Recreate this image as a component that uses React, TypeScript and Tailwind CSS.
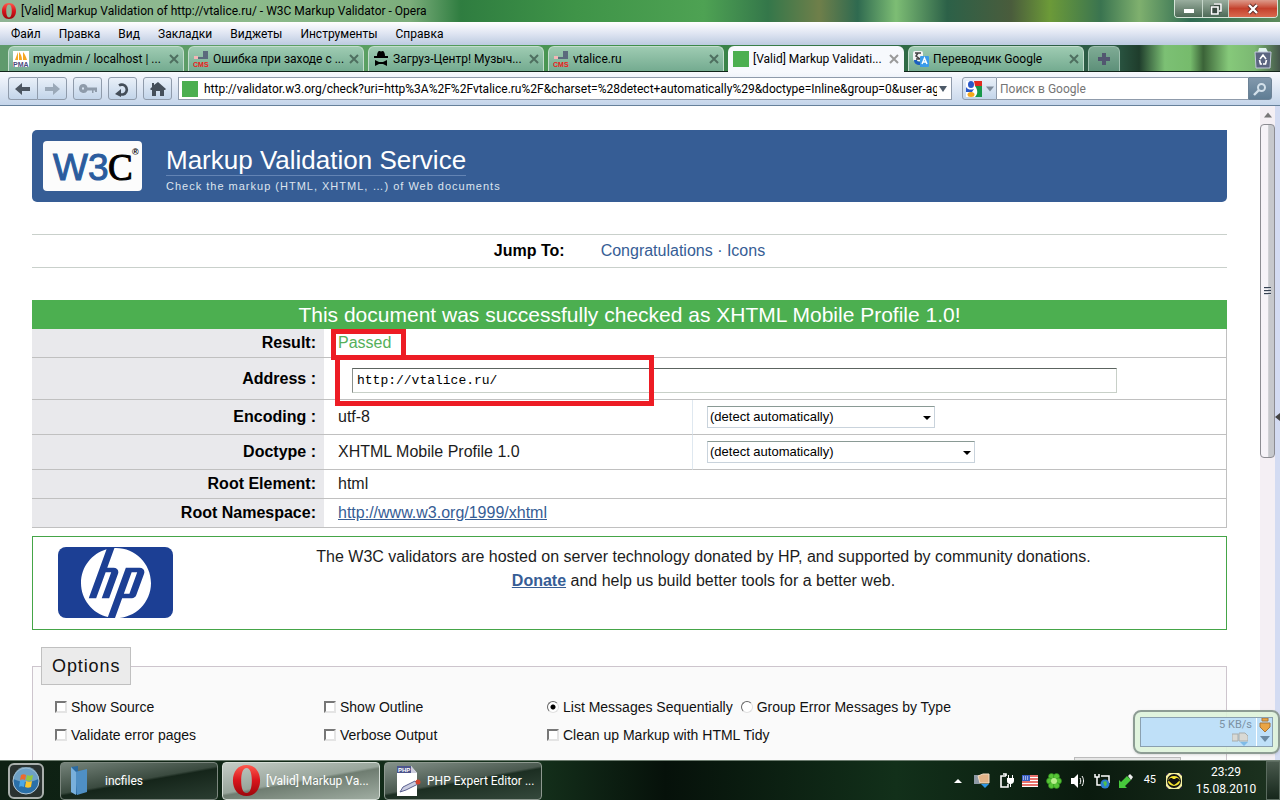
import type { ReactNode } from 'react';
import { SiHp } from 'react-icons/si';

const menuItems = ['Файл', 'Правка', 'Вид', 'Закладки', 'Виджеты', 'Инструменты', 'Справка'];

const OperaIcon = ({ className }: { className: string }) => (
  <svg viewBox="0 0 30 32" className={className} aria-hidden="true">
    <defs>
      <linearGradient id="operaRed" x1="0" y1="0" x2="0" y2="1">
        <stop offset="0" stopColor="#ff5a4e" />
        <stop offset="0.5" stopColor="#d8141b" />
        <stop offset="1" stopColor="#9c070c" />
      </linearGradient>
    </defs>
    <path
      fill="url(#operaRed)"
      fillRule="evenodd"
      d="M15 0C6 0 1 7 1 16s5 16 14 16 14-7 14-16S24 0 15 0zm0 3c4 0 5.500 6 5.500 13S19 29 15 29 9.500 23 9.500 16 11 3 15 3z"
    />
  </svg>
);

const PmaIcon = () => (
  <svg viewBox="0 0 16 16" className="size-4 shrink-0 bg-white" aria-hidden="true">
    <path d="M5 1v8H2c1-3 2-5 3-8zM6 1c2 2 3 5 3 8H6zM10 1c2 2 3 5 4 8h-4z" fill="#f5a623" />
    <text x="0" y="16" fontSize="7" fontWeight="bold" fill="#4a4a7c" fontFamily="Liberation Sans">PMA</text>
  </svg>
);

const CmsIcon = () => (
  <svg viewBox="0 0 16 16" className="size-4 shrink-0" aria-hidden="true">
    <path d="M10 0h5v8H5V6h5z" fill="#5b6a7d" />
    <path d="M1 5h4v3H1z" fill="#f3b6b6" />
    <text x="0" y="16" fontSize="7" fontWeight="bold" fill="#f01818" fontFamily="Liberation Sans">CMS</text>
  </svg>
);

const SpyIcon = () => (
  <svg viewBox="0 0 16 16" className="size-4 shrink-0" aria-hidden="true">
    <path d="M4 5c0-3 1-5 2.500-5 1 0 1 .6 1.500.6S9 0 9.500 0C11 0 12 2 12 5h3v2H1V5zM2 9l4 2h4l4-2v6l-4-2H6l-4 2z" fill="#000" />
  </svg>
);

const ValidIcon = () => <span className="size-4 shrink-0 bg-[#4caf50]" />;

const TranslateIcon = () => (
  <svg viewBox="0 0 16 16" className="size-4 shrink-0" aria-hidden="true">
    <rect x="0" y="0" width="10" height="10" rx="2" fill="#f4f4f4" />
    <path d="M2 2h6M5 2L3 5l4 3M3 8h5" stroke="#444" strokeWidth="1.500" fill="none" />
    <path d="M1 9c0 3 2 5 6 5v2l3-4-3-3v2c-2 0-3-1-3-2z" fill="#1b5fc0" />
    <rect x="7" y="5" width="9" height="11" rx="1" fill="#3a9bea" />
    <path d="M9 13l2.500-6 2.500 6M10 11h3" stroke="#fff" strokeWidth="1.400" fill="none" />
  </svg>
);

const tabs: { title: string; icon: ReactNode; active?: boolean }[] = [
  { title: 'myadmin / localhost | ...', icon: <PmaIcon /> },
  { title: 'Ошибка при заходе с ...', icon: <CmsIcon /> },
  { title: 'Загруз-Центр! Музыч...', icon: <SpyIcon /> },
  { title: 'vtalice.ru', icon: <CmsIcon /> },
  { title: '[Valid] Markup Validati...', icon: <ValidIcon />, active: true },
  { title: 'Переводчик Google', icon: <TranslateIcon /> },
];

const TitleBar = () => (
  <div className="flex h-[22px] shrink-0 items-center justify-between bg-[linear-gradient(90deg,#8fb495_0%,#8cba8b_20%,#7cae7c_32%,#2f7d40_36%,#3f9448_45%,#4ea253_55%,#34774a_60%,#6f7f4a_64%,#2f6a50_67%,#7dbd74_70%,#2c6148_74%,#4a5c3c_79%,#6c9a38_82%,#3a7450_86%,#7fb06e_89%,#2f6b52_93%,#5c8b5b_100%)]">
    <div className="flex items-center gap-1 pl-px">
      <OperaIcon className="size-4" />
      <span className="text-xs text-black">[Valid] Markup Validation of http://vtalice.ru/ - W3C Markup Validator - Opera</span>
    </div>
    <div className="mr-0.5 flex h-[18px] self-start overflow-hidden rounded-b border border-t-0 border-[#d5e4d8]">
      <button aria-label="Свернуть" className="flex w-7 items-center justify-center border-r border-[#c5d6ca] bg-gradient-to-b from-[#9aae9f] to-[#4e6a57]">
        <span className="mt-1 h-1 w-2.5 bg-white" />
      </button>
      <button aria-label="Развернуть" className="flex w-[26px] items-center justify-center border-r border-[#c5d6ca] bg-gradient-to-b from-[#9aae9f] to-[#4e6a57]">
        <svg viewBox="0 0 12 12" className="size-3" aria-hidden="true">
          <path d="M4 1h7v7H9M1 4h7v7H1zM4 6.500h1.500v2H4z" fill="none" stroke="#3b4a42" strokeWidth="3" />
          <path d="M4 1h7v7H9M1.500 4h6.500v7H1.500z" fill="none" stroke="#fff" strokeWidth="1.600" />
        </svg>
      </button>
      <button aria-label="Закрыть" className="flex w-12 items-center justify-center bg-gradient-to-b from-[#dc9a8b] via-[#c4402c] to-[#d9694e]">
        <svg viewBox="0 0 12 12" className="size-3" aria-hidden="true">
          <path d="M2 2l8 8M10 2l-8 8" stroke="#5c2a26" strokeWidth="4" />
          <path d="M2 2l8 8M10 2l-8 8" stroke="#fff" strokeWidth="2.400" />
        </svg>
      </button>
    </div>
  </div>
);

const MenuBar = () => (
  <nav className="flex h-[23px] shrink-0 items-center gap-[18px] bg-gradient-to-b from-white via-[#dfe5f2] to-[#bccbe0] pl-[11px]">
    {menuItems.map((item) => (
      <button key={item} className="text-xs text-black">{item}</button>
    ))}
  </nav>
);

const TabBar = () => (
  <div className="flex h-[27px] shrink-0 items-end border-b border-[#10241a] bg-[linear-gradient(90deg,#5f9a6c_0%,#5aa062_30%,#3f8f4a_50%,#2f6b45_70%,#2c5a46_87%,#1f3d2c_89%,#7cc074_91%,#76bb6c_93%,#3b6338_94%,#86c97a_96%,#7bb872_98%,#44554a_100%)] pl-2">
    <div className="flex min-w-0 flex-1 gap-1">
      {tabs.map((tab) => (
        <div
          key={tab.title}
          className={
            tab.active
              ? '-mb-px flex h-[26px] w-44 items-center gap-1 rounded-t-md bg-[#f7f9fd] px-[5px]'
              : 'flex h-[25px] w-44 items-center gap-1 rounded-t-md border border-b-0 border-[#c3ddcd] bg-gradient-to-b from-[#9ecbb2] to-[#74ab90] px-1'
          }
        >
          {tab.icon}
          <span className="flex-1 truncate text-xs text-black">{tab.title}</span>
          <button aria-label="Закрыть вкладку" className="shrink-0">
            <svg viewBox="0 0 10 10" className="size-2.5" aria-hidden="true">
              <path d="M1 1l8 8M9 1l-8 8" stroke={tab.active ? '#9a9a9a' : '#4f6f60'} strokeWidth="2" />
            </svg>
          </button>
        </div>
      ))}
      <button aria-label="Новая вкладка" className="flex h-[25px] w-8 items-center justify-center rounded-t-md border border-b-0 border-[#9fc0b0] bg-gradient-to-b from-[#7fab95] to-[#5d9079]">
        <svg viewBox="0 0 12 12" className="size-3" aria-hidden="true">
          <path d="M4 0h4v4h4v4H8v4H4V8H0V4h4z" fill="#525670" />
        </svg>
      </button>
    </div>
    <button aria-label="Закрытые вкладки" className="mr-2 self-center">
      <svg viewBox="0 0 18 22" className="h-[22px] w-[18px]" aria-hidden="true">
        <path d="M5 1h7l2 4H4z" fill="#dff2ee" />
        <path d="M1 5h16l-1 16H2z" fill="#5b6580" stroke="#c3cadb" />
        <path d="M6 12l3-4 3 4M12.500 13l-1 4H9M5.500 13l1 4H8" stroke="#fff" strokeWidth="1.600" fill="none" />
      </svg>
    </button>
  </div>
);

const toolButton = 'flex h-[23px] items-center justify-center rounded-[3px] border border-[#8f9bab] bg-gradient-to-b from-[#e9f0f8] to-[#c3d5ea]';

const ToolBar = () => (
  <div className="flex h-[34px] shrink-0 items-center gap-1.5 border-b border-[#66809a] bg-gradient-to-b from-[#f7f9fd] to-[#c5d5ea] px-2">
    <div className="flex">
      <button aria-label="Назад" className={`${toolButton} w-[29px] rounded-r-none border-r-0`}>
        <svg viewBox="0 0 16 12" className="h-3 w-4" aria-hidden="true">
          <path d="M0 6l7-6v4h8v4H7v4z" fill="#4c5661" />
        </svg>
      </button>
      <button aria-label="Вперед" className={`${toolButton} w-[30px] rounded-l-none`}>
        <svg viewBox="0 0 16 12" className="h-3 w-4" aria-hidden="true">
          <path d="M16 6L9 0v4H1v4h8v4z" fill="#9ba9b8" />
        </svg>
      </button>
    </div>
    <button aria-label="Пароль" className={`${toolButton} w-[29px]`}>
      <svg viewBox="0 0 18 10" className="h-2.5 w-[18px]" aria-hidden="true">
        <path d="M4.500 0a4.500 4.500 0 1 0 4 6.500H13V9h1.500V6.500H16V8h2V3.500H8.500A4.500 4.500 0 0 0 4.500 0zM3 3.500h2v2H3z" fill="#8e9baa" fillRule="evenodd" />
      </svg>
    </button>
    <button aria-label="Обновить" className={`${toolButton} w-[29px]`}>
      <svg viewBox="0 0 16 16" className="size-4" aria-hidden="true">
        <path d="M4 4.500a5 5 0 1 1 4 9H5" fill="none" stroke="#434d58" strokeWidth="2.600" />
        <path d="M0 13l6-5v8z" fill="#434d58" />
      </svg>
    </button>
    <button aria-label="Домой" className={`${toolButton} w-[29px]`}>
      <svg viewBox="0 0 16 14" className="h-3.5 w-4" aria-hidden="true">
        <path d="M8 0l8 7-1 1h-1v6h-4V9H6v5H2V8H1L0 7l2-2V1h2v2z" fill="#454f5a" />
      </svg>
    </button>
    <div className="flex h-[23px] min-w-0 flex-1 items-center gap-1.5 border border-[#8f9bab] bg-white pr-1 pl-[3px]">
      <ValidIcon />
      <input
        aria-label="Адрес"
        className="min-w-0 flex-1 text-xs text-black outline-none"
        defaultValue="http://validator.w3.org/check?uri=http%3A%2F%2Fvtalice.ru%2F&charset=%28detect+automatically%29&doctype=Inline&group=0&user-agent=W3C_Validator"
      />
      <svg viewBox="0 0 8 6" className="-ml-1 h-1.5 w-2 shrink-0" aria-hidden="true"><path d="M0 0h8L4 6z" fill="#4d5a68" /></svg>
    </div>
    <div className="ml-1 flex h-[23px] w-[310px]">
      <button aria-label="Google" className={`${toolButton} w-[35px] gap-1 rounded-r-none`}>
        <svg viewBox="0 0 16 16" className="size-4" aria-hidden="true">
          <rect width="16" height="16" fill="#fff" />
          <path d="M8 0h8v5H9z" fill="#e02a20" />
          <path d="M9 5h7v11H9c3-3 3-7 0-11z" fill="#17984a" />
          <ellipse cx="5" cy="3.500" rx="3" ry="3.500" fill="#2a58c8" />
          <path d="M0 6c2 3 5 3 8 2L6 11H0z" fill="#2a58c8" />
          <ellipse cx="5" cy="13.500" rx="3.500" ry="2.500" fill="#f6a81c" />
        </svg>
        <svg viewBox="0 0 8 5" className="h-1.5 w-2" aria-hidden="true"><path d="M0 0h8L4 5z" fill="#7c8a99" /></svg>
      </button>
      <input
        aria-label="Поиск"
        placeholder="Поиск в Google"
        className="min-w-0 flex-1 border-y border-[#8f9bab] bg-white px-[3px] text-xs outline-none placeholder:text-[#757575]"
      />
      <button aria-label="Найти" className="flex w-6 items-center justify-center rounded-r-[3px] border border-[#6c8296] bg-gradient-to-b from-[#8298ac] to-[#5f7d94]">
        <svg viewBox="0 0 14 14" className="size-3.5" aria-hidden="true">
          <circle cx="8.500" cy="5.500" r="3.500" fill="none" stroke="#d3e0ea" strokeWidth="2" />
          <path d="M6 8l-5 5" stroke="#d3e0ea" strokeWidth="2.400" />
        </svg>
      </button>
    </div>
  </div>
);

const W3CLogo = () => (
  <svg viewBox="0 0 99 50" className="h-[50px] w-[99px] rounded bg-[#fcfcfc]" role="img" aria-label="W3C">
    <text x="10" y="39" fontFamily="'Liberation Sans',sans-serif" fontSize="37" fill="#2b5c9e" stroke="#2b5c9e">W3</text>
    <text x="65" y="39" fontFamily="'Liberation Serif',serif" fontSize="37" fill="#000" stroke="#000">C</text>
    <text x="89" y="14" fontFamily="'Liberation Sans',sans-serif" fontSize="9" fontWeight="bold" fill="#000">®</text>
  </svg>
);

const PageHeader = () => (
  <header className="flex h-[72px] items-center rounded-[5px] rounded-tr-none bg-[#365d95] pl-[11px]">
    <W3CLogo />
    <div className="ml-6 self-start pt-[15px] font-['Liberation_Sans',sans-serif]">
      <h1>
        <a href="#service" className="inline-block border-b border-[#6384b4] text-[26px] leading-[30px] text-white">Markup Validation Service</a>
      </h1>
      <p className="text-[11px] leading-5 tracking-[1px] text-[#dde4ee]">Check the markup (HTML, XHTML, …) of Web documents</p>
    </div>
  </header>
);

const rowHead = 'border-b border-[#c0c0c0] bg-[#e9e9ec] pr-2 text-right font-bold text-black';
const rowCell = 'border-b border-[#c0c0c0] pl-3.5';

const DetectSelect = ({ id, className }: { id: string; className: string }) => (
  <div className={`relative ${className}`}>
    <select id={id} className="block h-[22px] w-full appearance-none border border-[#c9d3dc] border-t-[#8a9a95] bg-white pl-0.5 text-[13px] leading-5 text-black">
      <option>(detect automatically)</option>
    </select>
    <svg viewBox="0 0 8 4" className="pointer-events-none absolute top-2.5 right-1 h-1 w-2" aria-hidden="true"><path d="M0 0h8L4 4z" fill="#000" /></svg>
  </div>
);

const ResultTable = () => (
  <div className="relative mt-8">
    <table className="w-full table-fixed border-separate border-spacing-0 border-r border-[#c0c0c0] text-left">
      <caption className="h-[29px] bg-[#4caf50] text-[21px] leading-[29px] text-white">
        This document was successfully checked as XHTML Mobile Profile 1.0!
      </caption>
      <colgroup>
        <col className="w-[292px]" />
        <col className="w-[368px]" />
        <col />
      </colgroup>
      <tbody>
        <tr className="h-[29px]">
          <th scope="row" className={rowHead}>Result:</th>
          <td colSpan={2} className={`${rowCell} text-[#55b05a]`}>Passed</td>
        </tr>
        <tr className="h-[42px]">
          <th scope="row" className={rowHead}><label htmlFor="uri">Address :</label></th>
          <td colSpan={2} className={`${rowCell} pt-1 pr-28`}>
            <input
              id="uri"
              defaultValue="http://vtalice.ru/"
              className="ml-3.5 block h-[25px] w-full max-w-[765px] border border-[#c8d0c8] border-t-[#5c6460] border-l-[#8a908c] bg-white px-1 font-['Liberation_Mono',monospace] text-[13px] text-black outline-none"
            />
          </td>
        </tr>
        <tr className="h-[35px]">
          <th scope="row" className={rowHead}><label htmlFor="charset">Encoding :</label></th>
          <td className={rowCell}>utf-8</td>
          <td className={`${rowCell} border-l border-l-[#dfe8f0]`}><DetectSelect id="charset" className="w-[228px]" /></td>
        </tr>
        <tr className="h-[35px]">
          <th scope="row" className={rowHead}><label htmlFor="doctype">Doctype :</label></th>
          <td className={rowCell}>XHTML Mobile Profile 1.0</td>
          <td className={`${rowCell} border-l border-l-[#dfe8f0]`}><DetectSelect id="doctype" className="w-[268px]" /></td>
        </tr>
        <tr className="h-[29px]">
          <th scope="row" className={rowHead}>Root Element:</th>
          <td colSpan={2} className={rowCell}>html</td>
        </tr>
        <tr className="h-[29px]">
          <th scope="row" className={rowHead}>Root Namespace:</th>
          <td colSpan={2} className={rowCell}>
            <a href="http://www.w3.org/1999/xhtml" className="text-[#365d95] underline">http://www.w3.org/1999/xhtml</a>
          </td>
        </tr>
      </tbody>
    </table>
    {/* red marker frames */}
    <div className="pointer-events-none absolute top-[29px] left-[299px] h-[31px] w-[75px] border-[5px] border-[#ed1c24]" />
    <div className="pointer-events-none absolute top-[55px] left-[303px] h-[51px] w-[319px] border-[5px] border-[#ed1c24]" />
  </div>
);

const Donation = () => (
  <div className="mt-2 flex h-[94px] border border-[#45a548]">
    <div className="w-[148px] shrink-0 pt-2.5 pl-[25px]">
      <div className="flex h-[71px] w-[115px] items-center justify-center overflow-hidden rounded-lg bg-[#1c3f94]">
        <SiHp className="size-[70px] text-white" title="HP" />
      </div>
    </div>
    <p className="flex-1 pt-2 text-center leading-6">
      The W3C validators are hosted on server technology donated by HP, and supported by community donations.
      <br />
      <a href="#donate" className="font-bold text-[#365d95] underline">Donate</a> and help us build better tools for a better web.
    </p>
  </div>
);

const boxClass = 'size-3 appearance-none border-2 border-[#e4e4e4] border-t-[#777] border-l-[#777] bg-white';
const radioClass = "size-3 appearance-none rounded-full border border-[#e0e0e0] border-t-[#666] border-l-[#666] bg-white checked:bg-[radial-gradient(circle,#000_0_2px,#fff_3px)]";

const CheckOption = ({ label }: { label: string }) => (
  <label className="flex items-center gap-1">
    <input type="checkbox" className={boxClass} />
    {label}
  </label>
);

const Options = () => (
  <fieldset className="mt-[17px] h-[220px] border border-[#cdc5cd] bg-[#fafafa] pl-[22px] text-sm leading-7 text-[#111]">
    <legend className="-ml-3.5 h-[38px] border border-[#c0c0c0] bg-[#ebebeb] px-2.5 text-lg leading-9 tracking-wider">Options</legend>
    <div className="mt-2 grid grid-cols-[269px_223px_1fr] leading-7">
      <CheckOption label="Show Source" />
      <CheckOption label="Show Outline" />
      <div className="flex gap-2">
        <label className="flex items-center gap-1">
          <input type="radio" name="group" defaultChecked className={radioClass} />
          List Messages Sequentially
        </label>
        <label className="flex items-center gap-1">
          <input type="radio" name="group" className={radioClass} />
          Group Error Messages by Type
        </label>
      </div>
      <CheckOption label="Validate error pages" />
      <CheckOption label="Verbose Output" />
      <CheckOption label="Clean up Markup with HTML Tidy" />
    </div>
    <div className="mt-2 flex justify-end pr-[45px]">
      <button aria-label="Revalidate" className="h-8 w-[107px] border border-[#bbb] bg-[#e6e6e6]" />
    </div>
  </fieldset>
);

const Scrollbar = () => (
  <div className="flex w-[15px] shrink-0 flex-col items-center bg-[#f4eff4]">
    <div className="flex h-[18px] items-center">
      <svg viewBox="0 0 8 5" className="h-1.5 w-2" aria-hidden="true"><path d="M4 0l4 5H0z" fill="#777" /></svg>
    </div>
    <div className="flex h-[334px] w-[15px] flex-col items-center justify-center gap-px rounded-sm border border-[#8c8c92] bg-gradient-to-r from-[#f6f3f8] from-50% to-[#c6c8cc] to-60%">
      <span className="h-0.5 w-[7px] border-b border-gray-300 bg-gray-700" />
      <span className="h-0.5 w-[7px] border-b border-gray-300 bg-gray-700" />
      <span className="h-0.5 w-[7px] border-b border-gray-300 bg-gray-700" />
    </div>
  </div>
);

const SpeedWidget = () => (
  <div className="absolute right-0 bottom-[6px] w-[147px] rounded-lg border-2 border-[#8d9c94] bg-[#def3da]/90 p-[5px] shadow">
    <div className="flex h-[30px] border border-[#8aa0b0] bg-[#bfe0f8]">
      <div className="flex flex-1 flex-col items-end pr-1">
        <span className="text-[11px] leading-[14px] text-[#7b91a3]">5 KB/s</span>
        <svg viewBox="0 0 16 14" className="mr-1 h-3.5 w-4" aria-hidden="true">
          <path d="M0 2h6v7H0zM7 1h6l3 3v5H7z" fill="#d9d9d4" stroke="#a8adac" />
          <path d="M8 10h8l-4 4z" fill="#7fbce8" />
        </svg>
      </div>
      <div className="flex w-4 flex-col items-center gap-1 border-l border-white">
        <svg viewBox="0 0 12 14" className="h-3.5 w-3" aria-hidden="true">
          <path d="M3 0h6v3H3zM1 5h10v4l-5 5-5-5z" fill="#e9a545" stroke="#a8763a" />
        </svg>
        <svg viewBox="0 0 10 6" className="h-1.5 w-2.5" aria-hidden="true"><path d="M0 0h10L5 6z" fill="#6b8aa3" /></svg>
      </div>
    </div>
  </div>
);

const FolderIcon = () => (
  <svg viewBox="0 0 20 30" className="h-[30px] w-5 shrink-0" aria-hidden="true">
    <path d="M2 1l7-1v29l-7-3z" fill="#2c6aa0" />
    <path d="M6 6l12-3v23L8 29z" fill="#4f8fc4" />
    <path d="M2 1l5 5v23l-5-3z" fill="#79b0dc" />
  </svg>
);

const PhpIcon = () => (
  <svg viewBox="0 0 24 30" className="h-[30px] w-6 shrink-0" aria-hidden="true">
    <path d="M0 0h14l6 7v23H0z" fill="#fff" />
    <path d="M0 0h14v7H0z" fill="#4d558c" />
    <path d="M14 0v7h6z" fill="#ccd" />
    <text x="1" y="6" fontSize="6" fontWeight="bold" fill="#fff" fontFamily="Liberation Sans">PHP</text>
    <path d="M3 26l3-5 12-6 3 3-12 6z" fill="#c9cbe0" stroke="#5b6190" />
    <circle cx="21" cy="16" r="2.500" fill="#d2452e" />
  </svg>
);

const TrayIcons = () => (
  <div className="mr-1 flex items-center gap-2">
    <svg viewBox="0 0 8 4" className="mr-1 h-1 w-2" aria-hidden="true"><path d="M4 0l4 4H0z" fill="#fff" /></svg>
    <svg viewBox="0 0 16 16" className="size-4" aria-hidden="true">
      <path d="M0 2h6v9H0z" fill="#8d99a5" />
      <path d="M4 3l5-2h6v9H6z" fill="#e3b488" stroke="#f2dcc4" />
      <path d="M7 11h8l-4 4z" fill="#2f97e6" />
    </svg>
    <svg viewBox="0 0 16 16" className="size-4" aria-hidden="true">
      <path d="M8 3H3v11h7v-3M5 1h3v2" fill="none" stroke="#fff" strokeWidth="1.600" />
      <path d="M9 5h7v3c0 2-2 3-3 3v3h-1v-3c-2 0-3-1-3-3zM10 2h1v3h-1zM14 2h1v3h-1z" fill="#fff" />
    </svg>
    <svg viewBox="0 0 16 12" className="h-3 w-4" aria-hidden="true">
      <rect width="16" height="12" fill="#fff" />
      <path d="M0 1h16M0 4h16M0 7h16M0 10h16" stroke="#e2453c" strokeWidth="1.600" />
      <rect width="8" height="6" fill="#3a5fc4" />
      <path d="M1 2h6M1 4h6" stroke="#fff" strokeDasharray="1 1" />
    </svg>
    <svg viewBox="0 0 16 16" className="size-4" aria-hidden="true">
      <g fill="#57c437" stroke="#2c8a1b" strokeWidth="0.600">
        <circle cx="5.500" cy="3.500" r="3" /><circle cx="10.500" cy="3.500" r="3" />
        <circle cx="3.500" cy="8" r="3" /><circle cx="12.500" cy="8" r="3" />
        <circle cx="5.500" cy="12.500" r="3" /><circle cx="10.500" cy="12.500" r="3" />
      </g>
      <circle cx="8" cy="8" r="3" fill="#b7ee8c" />
    </svg>
    <svg viewBox="0 0 16 16" className="size-4" aria-hidden="true">
      <path d="M1 5h3l4-4v14l-4-4H1z" fill="#fff" />
      <path d="M10 5c1 2 1 4 0 6M12 3c2 3 2 7 0 10" fill="none" stroke="#fff" />
    </svg>
    <svg viewBox="0 0 16 16" className="size-4" aria-hidden="true">
      <path d="M1 1v3h4V1M3 4v8h5M7 3h8v7" fill="none" stroke="#fff" strokeWidth="1.500" />
      <circle cx="11" cy="11" r="4.500" fill="#2c7fd0" />
      <path d="M9 9l3-1 1 3-2 3z" fill="#4fc04c" />
    </svg>
    <svg viewBox="0 0 16 16" className="size-4" aria-hidden="true">
      <path d="M1 15V7l2 2 6-6 4 4-6 6 2 2z" fill="#47c83c" />
      <path d="M10 3l2-2 3 3-2 3z" fill="#eee" />
    </svg>
    <span className="mx-0.5 text-[11px] text-white">45</span>
    <svg viewBox="0 0 16 16" className="size-4" aria-hidden="true">
      <rect width="16" height="16" fill="#f5f0a0" />
      <path d="M0 0h3L0 3zM16 0v3l-3-3zM0 16v-3l3 3zM16 16h-3l3-3z" fill="#223" />
      <circle cx="8" cy="8" r="7" fill="#111" />
      <ellipse cx="8" cy="8" rx="6" ry="5" fill="#f5e52e" />
      <path d="M2 8c1-3 2-3 4-3l1 1h2l1-1c2 0 3 0 4 3-2 0-2 1-3 2l-3 2-3-2c-1-1-1-2-3-2z" fill="#111" />
    </svg>
  </div>
);

const taskButton = 'flex h-[38px] w-[158px] items-center rounded-sm border text-left text-xs whitespace-nowrap text-white';

const Taskbar = () => (
  <footer className="flex h-10 shrink-0 items-center justify-between border-t border-[#6d7d70] bg-[linear-gradient(90deg,#0e2013_0%,#14301b_42%,#06110a_52%,#12301a_70%,#0a1a0e_85%,#1d3320_100%)]">
    <div className="flex items-center pl-2">
      <button aria-label="Пуск" className="mr-4 flex h-9 w-9 items-center justify-center rounded-md border-2 border-[#a9afac] bg-[#2a3230]">
        <svg viewBox="0 0 28 28" className="size-7" aria-hidden="true">
          <circle cx="14" cy="14" r="13" fill="#2a6fa8" stroke="#b8c9d6" />
          <path d="M1.500 12a12.500 12.500 0 0 1 25 0c-8 4-17 4-25 0z" fill="#8bb5d2" opacity="0.700" />
          <path d="M9 8c2-1 3-1 5 0l-1 5c-2-1-3-1-5 0z" fill="#ee6a2d" />
          <path d="M15 8c2 1 3 1 6 0l-1 5c-2 1-4 1-6 0z" fill="#92c83e" />
          <path d="M8 14c2-1 3-1 5 0l-1 6c-2-1-4-1-5 0z" fill="#4aa8e8" />
          <path d="M14 14c2 1 4 1 6 0l-1 6c-2 1-4 1-6 0z" fill="#fbc62c" />
        </svg>
      </button>
      <div className="flex gap-1">
        <button className={`${taskButton} gap-4 border-[#7c877f] bg-[linear-gradient(170deg,#75837a_0%,#3a4a3f_48%,#15251a_52%,#2a3d31_100%)] pl-2`}>
          <FolderIcon />
          incfiles
        </button>
        <button className={`${taskButton} gap-1 border-[#d5ddd6] bg-[linear-gradient(170deg,#c4ccc6_0%,#98a59b_48%,#6f7d71_52%,#a0ada2_100%)] pl-2`}>
          <OperaIcon className="size-[31px] shrink-0" />
          [Valid] Markup Va...
        </button>
        <button className={`${taskButton} gap-1.5 border-[#8e9990] bg-[linear-gradient(170deg,#85928a_0%,#4a594f_48%,#1c2e22_52%,#35493c_100%)] pl-3`}>
          <PhpIcon />
          PHP Expert Editor ...
        </button>
      </div>
    </div>
    <div className="flex h-full items-center">
      <TrayIcons />
      <div className="w-20 text-center text-xs leading-[17px] text-white">
        23:29
        <br />
        15.08.2010
      </div>
      <button aria-label="Свернуть все окна" className="h-full w-3.5 border border-[#5b6b5f] bg-gradient-to-b from-[#4a5a4e] to-[#16271b]" />
    </div>
  </footer>
);

const App = () => (
  <div className="flex h-screen flex-col overflow-hidden bg-white font-['Roboto','Open_Sans',sans-serif]">
    <TitleBar />
    <MenuBar />
    <TabBar />
    <ToolBar />
    <div className="relative flex min-h-0 flex-1">
      <main className="min-w-0 flex-1 overflow-hidden bg-white pt-6 pr-[33px] pl-8 font-['Liberation_Sans',sans-serif] text-base text-[#1c1c1c]">
        <PageHeader />
        <div className="mt-8 flex h-[34px] items-center justify-center gap-9 border-y border-[#c9d0cb]">
          <strong className="text-black">Jump To:</strong>
          <span className="text-[#365d95]">
            <a href="#congrats">Congratulations</a> · <a href="#icons">Icons</a>
          </span>
        </div>
        <ResultTable />
        <Donation />
        <Options />
      </main>
      <Scrollbar />
      <div className="flex w-[5px] shrink-0 items-center bg-[#d3dbf2] pb-8">
        <svg viewBox="0 0 5 8" className="h-2 w-[5px]" aria-hidden="true"><path d="M5 0v8L0 4z" fill="#444" /></svg>
      </div>
      <SpeedWidget />
    </div>
    <Taskbar />
  </div>
);

export default App;
